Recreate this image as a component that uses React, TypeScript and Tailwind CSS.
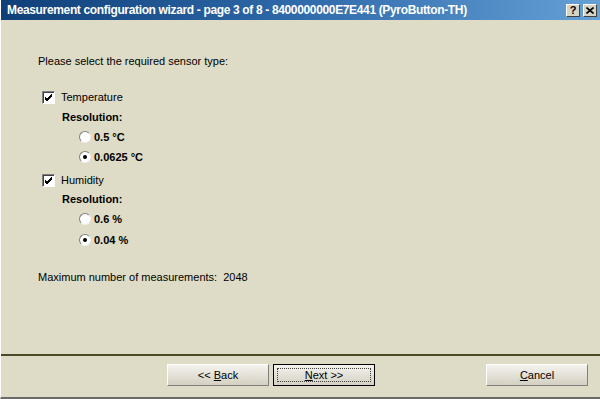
import React from 'react';

function Check() {
  return (
    <span className="w-[13px] h-[13px] bg-white border border-t-[#808080] border-l-[#808080] border-b-white border-r-white shadow-[inset_1px_1px_0_#404040] flex items-center justify-center">
      <svg width="9" height="9" viewBox="0 0 9 9">
        <path d="M1 4 L3 6 L8 1 M1 5 L3 7 L8 2 M1 6 L3 8 L8 3" stroke="#000" strokeWidth="1" fill="none" />
      </svg>
    </span>
  );
}

function Radio({ on }: { on: boolean }) {
  return (
    <span className="w-[12px] h-[12px] rounded-full bg-white border border-t-[#808080] border-l-[#808080] border-b-[#f0f0f0] border-r-[#f0f0f0] flex items-center justify-center">
      {on && <span className="w-[4px] h-[4px] rounded-full bg-black" />}
    </span>
  );
}

function Btn({ children, def }: { children: React.ReactNode; def?: boolean }) {
  return (
    <button
      className={
        'w-[102px] h-[22px] text-[11px] text-black bg-gradient-to-b from-[#f4f3ee] to-[#d4d0c2] ' +
        (def
          ? 'border border-black p-[3px]'
          : 'border border-t-white border-l-white border-r-[#808080] border-b-[#808080]')
      }
    >
      {def ? (
        <span className="flex items-center justify-center w-full h-full border border-dotted border-[#404040]">{children}</span>
      ) : (
        children
      )}
    </button>
  );
}

export default function App() {
  return (
    <div className="w-[600px] h-[399px] bg-[#dedbc6] flex flex-col border-l border-l-white border-b-2 border-b-[#6b6b6b] font-['Liberation_Sans',Arial,sans-serif] text-[11px] text-black overflow-hidden">
      <div className="h-[20px] shrink-0 flex items-center pl-[6px] pr-[3px] bg-gradient-to-r from-[#0f3f78] via-[#2f6aaa] to-[#65a0d6]">
        <span className="text-white font-bold text-[12px] tracking-[-0.35px] flex-1 min-w-0 whitespace-nowrap overflow-hidden">
          Measurement configuration wizard - page 3 of 8 - 8400000000E7E441 (PyroButton-TH)
        </span>
        <span className="shrink-0 w-[14px] h-[13px] bg-[#d8d4c4] border border-t-white border-l-white border-r-[#404040] border-b-[#404040] flex items-center justify-center text-[11px] font-bold leading-none mr-[3px]">?</span>
        <span className="shrink-0 w-[14px] h-[13px] bg-[#d8d4c4] border border-t-white border-l-white border-r-[#404040] border-b-[#404040] flex items-center justify-center">
          <svg width="8" height="7" viewBox="0 0 8 7">
            <path d="M0.5 0.5 L7.5 6.5 M7.5 0.5 L0.5 6.5" stroke="#000" strokeWidth="1.6" />
          </svg>
        </span>
      </div>

      <div className="flex-1 pl-[37px] pt-[34px]">
        <div className="h-[14px] leading-[14px]">Please select the required sensor type:</div>

        <div className="mt-[22px] flex items-center gap-[6px] pl-[4px] h-[14px]">
          <Check />
          <span>Temperature</span>
        </div>
        <div className="mt-[6px] pl-[24px] h-[14px] font-bold leading-[14px]">Resolution:</div>
        <div className="mt-[6px] pl-[41px] flex items-center gap-[3px] h-[14px] font-bold">
          <Radio on={false} />
          <span>0.5 °C</span>
        </div>
        <div className="mt-[6px] pl-[41px] flex items-center gap-[3px] h-[14px] font-bold">
          <Radio on />
          <span>0.0625 °C</span>
        </div>

        <div className="mt-[9px] flex items-center gap-[6px] pl-[4px] h-[14px]">
          <Check />
          <span>Humidity</span>
        </div>
        <div className="mt-[5px] pl-[24px] h-[14px] font-bold leading-[14px]">Resolution:</div>
        <div className="mt-[6px] pl-[41px] flex items-center gap-[3px] h-[14px] font-bold">
          <Radio on={false} />
          <span>0.6 %</span>
        </div>
        <div className="mt-[7px] pl-[41px] flex items-center gap-[3px] h-[14px] font-bold">
          <Radio on />
          <span>0.04 %</span>
        </div>

        <div className="mt-[23px] h-[14px] leading-[14px] whitespace-pre">Maximum number of measurements:  2048</div>
      </div>

      <div className="shrink-0 border-t-2 border-t-[#4a4a28] h-[43px] flex items-start pt-[8px] pl-[166px]">
        <Btn>
          &lt;&lt; <u>B</u>ack
        </Btn>
        <div className="ml-[4px]">
          <Btn def>
            <u>N</u>ext &gt;&gt;
          </Btn>
        </div>
        <div className="ml-[111px]">
          <Btn>
            <u>C</u>ancel
          </Btn>
        </div>
      </div>
    </div>
  );
}
